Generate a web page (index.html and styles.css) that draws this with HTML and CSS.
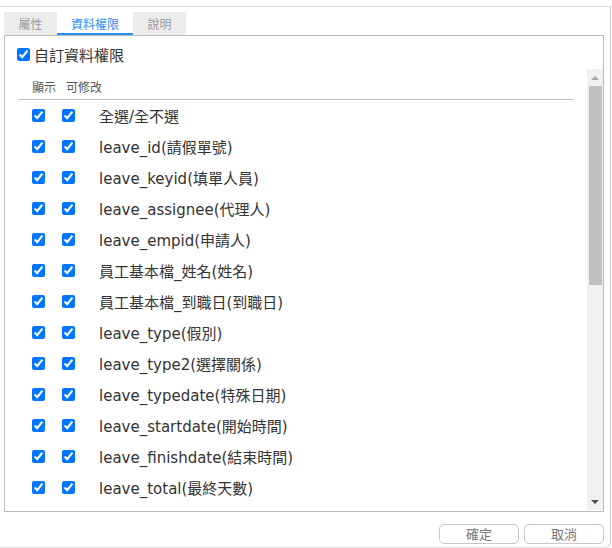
FILE: index.html
```html
<!DOCTYPE html>
<html lang="zh-Hant">
<head>
  <meta charset="UTF-8">
  <title>資料權限</title>
  <link rel="stylesheet" href="styles.css">
</head>
<body>
  <div class="window">
    <div class="tabs">
      <div class="tab">屬性</div>
      <div class="tab active">資料權限</div>
      <div class="tab">說明</div>
    </div>

    <div class="panel">
      <label class="custom">
        <input type="checkbox" checked>
        <span>自訂資料權限</span>
      </label>

      <div class="list">
        <div class="list-body">
          <div class="list-head">
            <span class="col-show">顯示</span>
            <span class="col-edit">可修改</span>
          </div>
          <div id="rows"></div>
        </div>
        <div class="scrollbar">
          <div class="sb-btn up"></div>
          <div class="sb-track"><div class="sb-thumb"></div></div>
          <div class="sb-btn down"></div>
        </div>
      </div>
    </div>

    <div class="footer">
      <button class="btn">確定</button>
      <button class="btn">取消</button>
    </div>
  </div>

<script>
const fields = [
  '全選/全不選',
  'leave_id(請假單號)',
  'leave_keyid(填單人員)',
  'leave_assignee(代理人)',
  'leave_empid(申請人)',
  '員工基本檔_姓名(姓名)',
  '員工基本檔_到職日(到職日)',
  'leave_type(假別)',
  'leave_type2(選擇關係)',
  'leave_typedate(特殊日期)',
  'leave_startdate(開始時間)',
  'leave_finishdate(結束時間)',
  'leave_total(最終天數)'
];

const rows = document.getElementById('rows');
fields.forEach(name => {
  const row = document.createElement('div');
  row.className = 'row';
  row.innerHTML =
    '<input type="checkbox" checked>' +
    '<input type="checkbox" checked>' +
    '<span class="name"></span>';
  row.querySelector('.name').textContent = name;
  rows.appendChild(row);
});
</script>
</body>
</html>
```

FILE: styles.css
```css
* {
  box-sizing: border-box;
}

body {
  margin: 0;
  background: #fff;
  font-family: "DejaVu Sans", "Noto Sans CJK TC", sans-serif;
  color: #333;
  overflow: hidden;
}

.window {
  margin-top: 6px;
  width: 611px;
  height: 542px;
  border-top: 1px solid #e0e0e0;
  border-right: 1px solid #c8c8c8;
  border-bottom: 1px solid #e0e0e0;
  border-bottom-right-radius: 6px;
  padding: 5px 6px 0 4px;
}

/* tabs */
.tabs {
  display: flex;
  width: 182px;
  height: 23px;
  background: #ececec;
}

.tab {
  width: 53px;
  text-align: center;
  font-family: "Noto Sans CJK TC", sans-serif;
  font-size: 12px;
  line-height: 23px;
  color: #999;
}

.tab.active {
  width: 76px;
  background: #fff;
  color: #2d8cf0;
  border-bottom: 2px solid #2d8cf0;
}

/* panel */
.panel {
  width: 600px;
  height: 477px;
  border: 1px solid #bbb;
  padding-top: 11px;
  display: flex;
  flex-direction: column;
}

.custom {
  display: flex;
  align-items: center;
  gap: 4px;
  margin-left: 12px;
  height: 15px;
  font-size: 15px;
}

.custom input,
.row input {
  width: 13px;
  height: 13px;
  margin: 0;
}

.list {
  margin-top: 7px;
  flex: 1;
  display: flex;
  min-height: 0;
  margin-bottom: 1px;
}

.list-body {
  flex: 1;
  overflow: hidden;
  padding: 0 13px;
}

.list-head {
  height: 31px;
  border-bottom: 1px solid #c0c0c0;
  display: flex;
  align-items: flex-end;
  padding: 0 0 4px 14px;
  font-family: "Noto Sans CJK TC", sans-serif;
  font-size: 12px;
  color: #555;
}

.col-show {
  width: 34px;
}

.row {
  height: 31px;
  display: flex;
  align-items: center;
  padding-left: 14px;
  padding-bottom: 1px;
  font-size: 15px;
}

.row input + input {
  margin-left: 17px;
}

.name {
  margin-left: 24px;
}

/* scrollbar */
.scrollbar {
  width: 16px;
  background: #f1f1f1;
  display: flex;
  flex-direction: column;
}

.sb-btn {
  height: 17px;
  display: flex;
  align-items: center;
  justify-content: center;
}

.sb-btn::before {
  content: "";
  border-left: 4px solid transparent;
  border-right: 4px solid transparent;
}

.sb-btn.up::before {
  border-bottom: 4px solid #a3a3a3;
}

.sb-btn.down::before {
  border-top: 4px solid #505050;
}

.sb-track {
  flex: 1;
}

.sb-thumb {
  height: 199px;
  margin: 0 1px 0 2px;
  background: #c1c1c1;
}

/* footer */
.footer {
  display: flex;
  justify-content: flex-end;
  gap: 5px;
  margin-top: 12px;
}

.btn {
  width: 80px;
  height: 20px;
  padding: 0;
  background: #fff;
  border: 1px solid #c8c8c8;
  border-radius: 5px;
  font-family: "Noto Sans CJK TC", sans-serif;
  font-size: 13px;
  color: #777;
  line-height: 18px;
}
```
